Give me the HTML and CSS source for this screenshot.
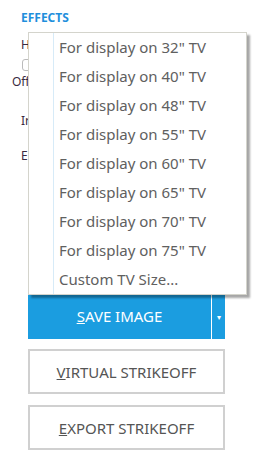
FILE: index.html
```html
<!DOCTYPE html>
<html lang="en">
<head>
  <meta charset="UTF-8" />
  <meta name="viewport" content="width=device-width, initial-scale=1.0"/>
  <title>Effects</title>
  <link rel="stylesheet" href="styles.css">
</head>
<body>
  <div class="panel">
    <h3 class="section-title">EFFECTS</h3>

    <!-- labels below are mostly hidden behind the open menu -->
    <div class="setting setting-halftone">H</div>
    <div class="toggle"><span class="toggle-track"></span></div>
    <div class="setting setting-off">Off</div>
    <div class="setting setting-intensity">Ir</div>
    <div class="setting setting-edge">E</div>

    <div class="actions">
      <div class="split-button">
        <button class="split-main"><u>S</u>AVE IMAGE</button>
        <button class="split-arrow">&#9662;</button>
      </div>
      <button class="outline-button"><u>V</u>IRTUAL STRIKEOFF</button>
      <button class="outline-button"><u>E</u>XPORT STRIKEOFF</button>
    </div>

    <ul class="menu">
      <li>For display on 32" TV</li>
      <li>For display on 40" TV</li>
      <li>For display on 48" TV</li>
      <li>For display on 55" TV</li>
      <li>For display on 60" TV</li>
      <li>For display on 65" TV</li>
      <li>For display on 70" TV</li>
      <li>For display on 75" TV</li>
      <li>Custom TV Size...</li>
    </ul>
  </div>
</body>
</html>
```

FILE: styles.css
```css
body {
  margin: 0;
  background: #fff;
  font-family: 'Noto Sans', 'Open Sans', sans-serif;
  color: #333;
}
.panel {
  position: relative;
  height: 468px;
}
.section-title {
  margin: 0;
  padding: 9px 0 0 21px;
  font-size: 12px;
  font-weight: 700;
  color: #1f8fdc;
}
.setting {
  font-size: 12px;
  color: #3a2a40;
  padding-left: 21px;
}
.setting-halftone { margin-top: 10px; }
.setting-off { padding-left: 12px; margin-top: 2px; }
.setting-intensity { margin-top: 22px; }
.setting-edge { margin-top: 18px; }
.toggle {
  margin: 6px 0 0 22px;
  height: 12px;
}
.toggle-track {
  display: block;
  width: 30px;
  height: 10px;
  border: 1px solid #bbb;
  border-radius: 3px;
}

.actions {
  position: absolute;
  top: 293px;
  left: 28px;
  width: 197px;
  display: flex;
  flex-direction: column;
  gap: 10px;
}
.split-button {
  display: flex;
  height: 46px;
  background: #1b9de0;
}
.split-main, .split-arrow {
  border: none;
  background: transparent;
  color: #fff;
  font-family: inherit;
  cursor: pointer;
}
.split-main {
  flex: 1;
  font-size: 15px;
  padding: 0;
}
.split-arrow {
  width: 14px;
  font-size: 8px;
  padding: 0;
  border-left: 1px solid #fff;
}
.outline-button {
  height: 45px;
  background: #fff;
  border: 2px solid #d0d0d0;
  color: #555;
  font-family: inherit;
  font-size: 15px;
  cursor: pointer;
}
.outline-button + .outline-button { margin-top: 1px; }

.menu {
  position: absolute;
  top: 32px;
  left: 28px;
  width: 217px;
  margin: 0;
  padding: 0;
  list-style: none;
  background: #fff linear-gradient(to right, transparent 24px, #d7ebf8 24px, #d7ebf8 25px, transparent 25px);
  border: 1px solid #d4d4cc;
  box-shadow: 3px 3px 2px rgba(0, 0, 0, 0.35);
}
.menu li {
  height: 29px;
  line-height: 28px;
  padding-left: 30px;
  font-size: 15px;
  color: #606060;
  white-space: nowrap;
}
```
